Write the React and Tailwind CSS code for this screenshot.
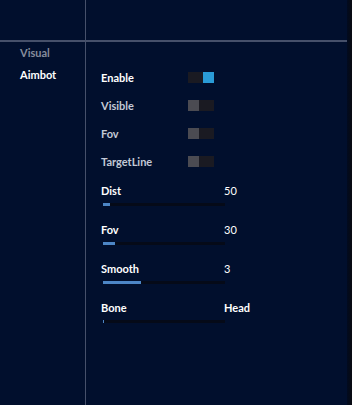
import React from 'react';

const toggles = [
  { name: 'Enable', on: true },
  { name: 'Visible', on: false },
  { name: 'Fov', on: false },
  { name: 'TargetLine', on: false },
];

const sliders = [
  { name: 'Dist', value: '50', fill: 7, light: true },
  { name: 'Fov', value: '30', fill: 12, light: true },
  { name: 'Smooth', value: '3', fill: 38, light: true },
  { name: 'Bone', value: 'Head', fill: 1 },
];

function Toggle({ on }) {
  return (
    <div className="flex h-[11px] w-[26px] bg-[#1a1a22]">
      {on ? (
        <div className="ml-auto h-full w-[11px] bg-[#2a9bd6]" />
      ) : (
        <div className="h-full w-[11px] bg-[#4b4b52]" />
      )}
    </div>
  );
}

export default function App() {
  return (
    <div
      className="flex h-[405px] w-[352px] bg-[#010f2d] text-[11px] leading-[14px] font-bold"
      style={{ fontFamily: 'Lato, "Open Sans", sans-serif' }}
    >
      <div className="flex w-[347px] flex-col">
        <div className="h-[42px] border-b-2 border-[#46506a] flex">
          <div className="w-[86px] border-r border-[#46506a]" />
        </div>
        <div className="flex flex-1">
          <div className="w-[86px] border-r border-[#46506a] pl-[20px] pt-[4px]">
            <div className="h-[22px] text-[#858c9c]">Visual</div>
            <div className="text-white">Aimbot</div>
          </div>
          <div className="flex-1 pl-[15px] pt-[29px]">
            {toggles.map(t => (
              <div key={t.name} className="flex h-[28px] items-start">
                <span className={`w-[87px] ${t.on ? 'text-white' : 'text-[#c3c9d6]'}`}>{t.name}</span>
                <div className="mt-[1px]"><Toggle on={t.on} /></div>
              </div>
            ))}
            <div className="pt-[1px]">
              {sliders.map(s => (
                <div key={s.name} className="h-[39px]">
                  <div className="flex text-white">
                    <span className="w-[123px]">{s.name}</span>
                    <span className={s.light ? 'font-normal' : ''}>{s.value}</span>
                  </div>
                  <div className="mt-[5px] ml-[2px] h-[3px] w-[122px] bg-[#050a18]">
                    <div className="h-full bg-[#4d86c6]" style={{ width: s.fill }} />
                  </div>
                </div>
              ))}
            </div>
          </div>
        </div>
      </div>
      <div className="flex-1 bg-gradient-to-r from-[#010a20] to-[#0a0a10]" />
    </div>
  );
}
